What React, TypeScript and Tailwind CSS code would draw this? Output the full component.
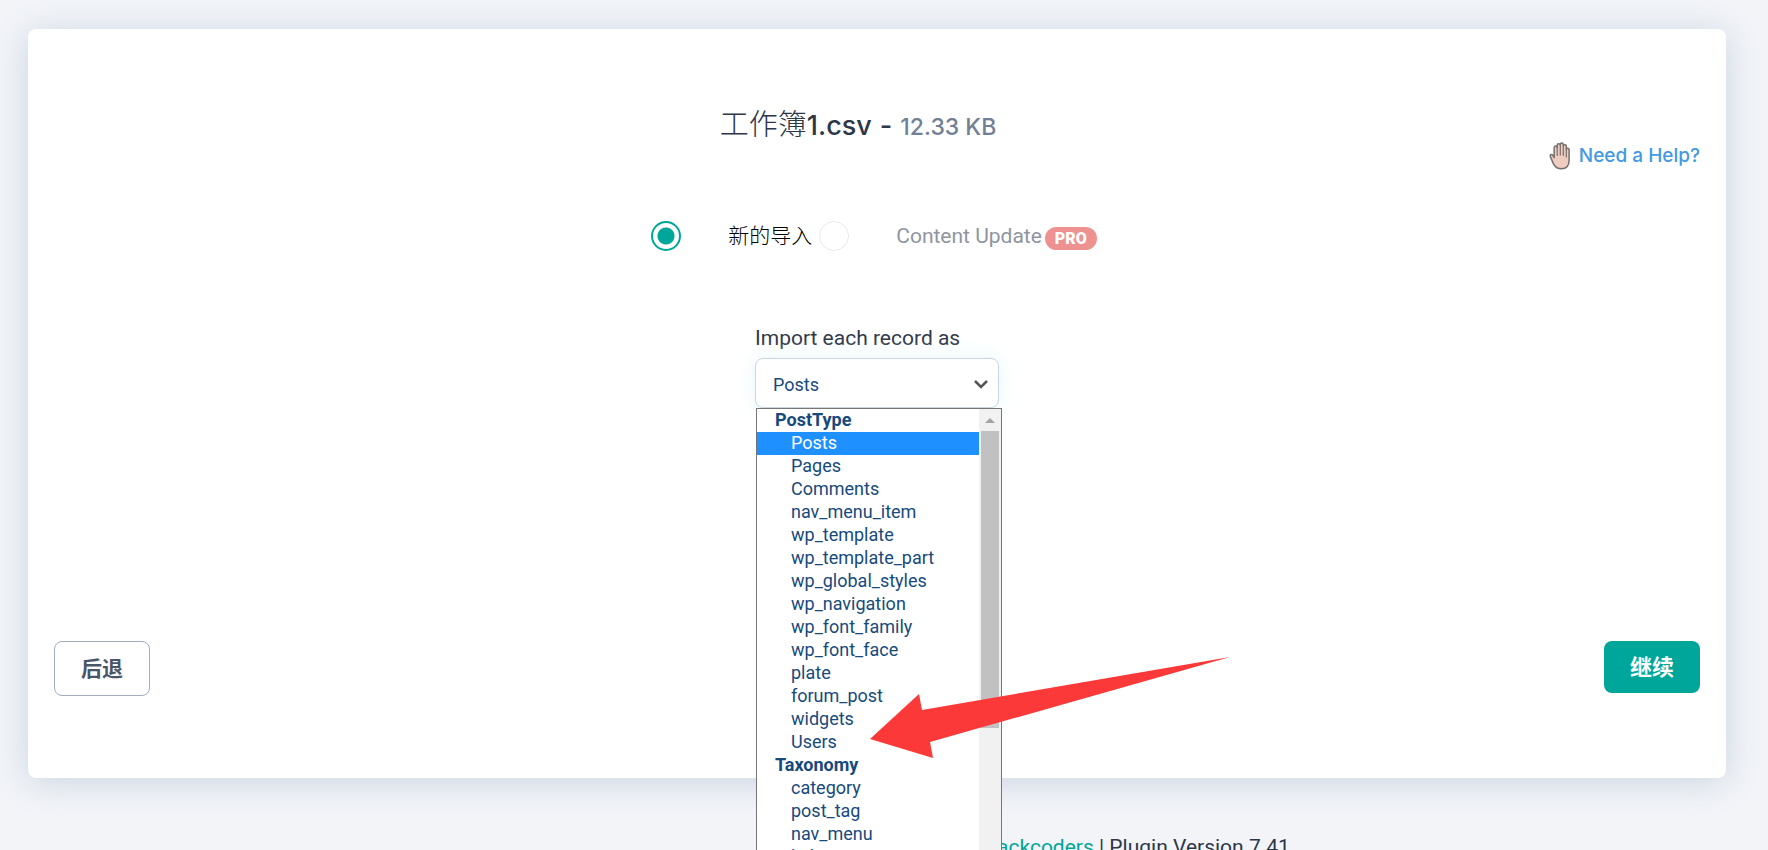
interface OptionGroup {
  label: string;
  options: string[];
}

const groups: OptionGroup[] = [
  {
    label: "PostType",
    options: [
      "Posts",
      "Pages",
      "Comments",
      "nav_menu_item",
      "wp_template",
      "wp_template_part",
      "wp_global_styles",
      "wp_navigation",
      "wp_font_family",
      "wp_font_face",
      "plate",
      "forum_post",
      "widgets",
      "Users",
    ],
  },
  {
    label: "Taxonomy",
    options: ["category", "post_tag", "nav_menu", "link_category"],
  },
];

const radioClass =
  "size-[30px] shrink-0 appearance-none rounded-full border border-[#e9e9ee] bg-white checked:border-2 checked:border-[#00a699] checked:bg-[radial-gradient(circle,#00a699_8px,transparent_9px)]";

function HandIcon() {
  return (
    <svg viewBox="0 0 22 28" className="h-7 w-[22px]" aria-hidden="true">
      <path
        d="M5.2 15.500V5.600a1.500 1.500 0 0 1 3 0V3.400a1.500 1.500 0 0 1 3.100-.2V2.600a1.500 1.500 0 0 1 3 0v1.600a1.500 1.500 0 0 1 3 .2v3.200a1.400 1.400 0 0 1 2.800 0v11c0 5-2.600 8.200-7.600 8.200-4.400 0-6.700-2-8.200-5.200L1.400 14.600c-.7-1.700 1-2.900 2.300-1.500z"
        fill="#f0cbc0"
        stroke="#75716d"
        strokeWidth="1.500"
        strokeLinejoin="round"
      />
      <path
        d="M8.200 5v8.500M11.300 3.500v9.500M14.300 4.500v9M17.300 7.500v7.500"
        fill="none"
        stroke="#75716d"
        strokeWidth="1.200"
        strokeLinecap="round"
      />
    </svg>
  );
}

function RecordList() {
  return (
    <div className="absolute top-full left-px z-10 flex w-[246px] border border-[#767676] bg-white">
      <ul role="listbox" aria-label="Import each record as" className="flex-1 text-lg text-[#174a7c]">
        {groups.map((group) => (
          <li key={group.label} role="group" aria-label={group.label}>
            <div className="h-[23px] pl-[18px] leading-[21px] font-bold">{group.label}</div>
            <ul>
              {group.options.map((option) => (
                <li
                  key={option}
                  role="option"
                  aria-selected={option === "Posts"}
                  className="h-[23px] pl-[34px] leading-[21px] aria-selected:bg-[#1e90ff] aria-selected:text-white"
                >
                  {option}
                </li>
              ))}
            </ul>
          </li>
        ))}
      </ul>
      <div className="flex w-[22px] flex-col items-center bg-[#f1f1f1]">
        <svg viewBox="0 0 22 22" className="size-[22px]" aria-hidden="true">
          <path d="M6 14l5-5 5 5z" fill="#a3a3a3" />
        </svg>
        <div className="h-[297px] w-[18px] bg-[#c1c1c1]" />
      </div>
    </div>
  );
}

function Arrow() {
  return (
    <svg
      viewBox="0 0 360 101"
      className="pointer-events-none absolute top-[299px] left-[115px] z-20 h-[101px] w-[360px]"
      aria-hidden="true"
    >
      <path d="M0 82L49 37l3 16L360 0 60 85l3 16z" fill="#fb3938" />
    </svg>
  );
}

export default function App() {
  return (
    <div className="h-screen overflow-hidden bg-[#f2f4f8] pt-[29px] pr-[42px] pl-7 font-[Roboto,'Noto_Sans_CJK_SC',sans-serif] text-[#2d3748]">
      <main className="rounded-lg bg-white px-[26px] pt-[73px] pb-[82px] shadow-[0_4px_35px_#cbd5e0]">
        <h1 className="flex h-10 items-baseline justify-center pr-[38px] font-[Inter,'Noto_Sans_CJK_SC',sans-serif] text-[27px] leading-10 font-medium">
          <span className="font-['Noto_Sans_CJK_SC',sans-serif] text-[29px] font-light">工作簿</span>
          <span>1.csv</span>
          <span className="px-2">-</span>
          <span className="text-[23px] text-[#718096]">12.33 KB</span>
        </h1>

        <div className="flex h-7 items-center justify-end">
          <a
            href="#help"
            className="flex items-center gap-2 font-[Inter,sans-serif] text-[19px] font-medium text-[#4299e1]"
          >
            <HandIcon />
            Need a Help?
          </a>
        </div>

        <div className="mt-[51px] flex items-center justify-center pr-[6px] text-[21px] leading-[30px]">
          <input id="new-import" type="radio" name="mode" defaultChecked className={radioClass} />
          <label htmlFor="new-import" className="ml-[47px] font-light text-black">
            新的导入
          </label>
          <input id="content-update" type="radio" name="mode" className={`${radioClass} ml-[7px]`} />
          <label htmlFor="content-update" className="ml-[47px] text-[#8e95a2]">
            Content Update
          </label>
          <span className="mt-1 ml-[3px] rounded-full bg-[#ed9290] px-[10px] text-base leading-[23px] font-black text-white">
            PRO
          </span>
        </div>

        <div className="mx-auto mt-[72px] w-[244px]">
          <label htmlFor="record-type" className="block pb-1 text-[21px] leading-[31px] whitespace-nowrap">
            Import each record as
          </label>
          <div className="relative">
            <select
              id="record-type"
              className="block h-[50px] w-full appearance-none rounded-lg border border-[#cbd5e0] bg-white px-[17px] pt-[3px] text-lg text-[#174a7c] shadow-[0_0_20px_#e6f6f8]"
            >
              {groups.map((group) => (
                <optgroup key={group.label} label={group.label}>
                  {group.options.map((option) => (
                    <option key={option}>{option}</option>
                  ))}
                </optgroup>
              ))}
            </select>
            <svg
              viewBox="0 0 16 16"
              className="pointer-events-none absolute top-[18px] right-[10px] size-4"
              aria-hidden="true"
            >
              <path d="M2 5l6 6 6-6" fill="none" stroke="#555" strokeWidth="2.500" />
            </svg>
            <RecordList />
            <Arrow />
          </div>
        </div>

        <div className="mt-[233px] flex items-start justify-between font-bold">
          <button
            type="button"
            className="h-[55px] rounded-lg border border-[#a0aec0] px-[26px] pt-[3px] text-[21px] text-[#4a5568]"
          >
            后退
          </button>
          <button type="button" className="h-[52px] rounded-lg bg-[#00a699] px-[26px] text-[22px] text-white">
            继续
          </button>
        </div>
      </main>

      <footer className="mt-[54px] flex justify-center pl-[502px] text-[21px] leading-[30px] whitespace-pre">
        <a href="#smackcoders" className="text-[#00a699]">
          Smackcoders
        </a>
        {" | Plugin Version 7.41"}
      </footer>
    </div>
  );
}
